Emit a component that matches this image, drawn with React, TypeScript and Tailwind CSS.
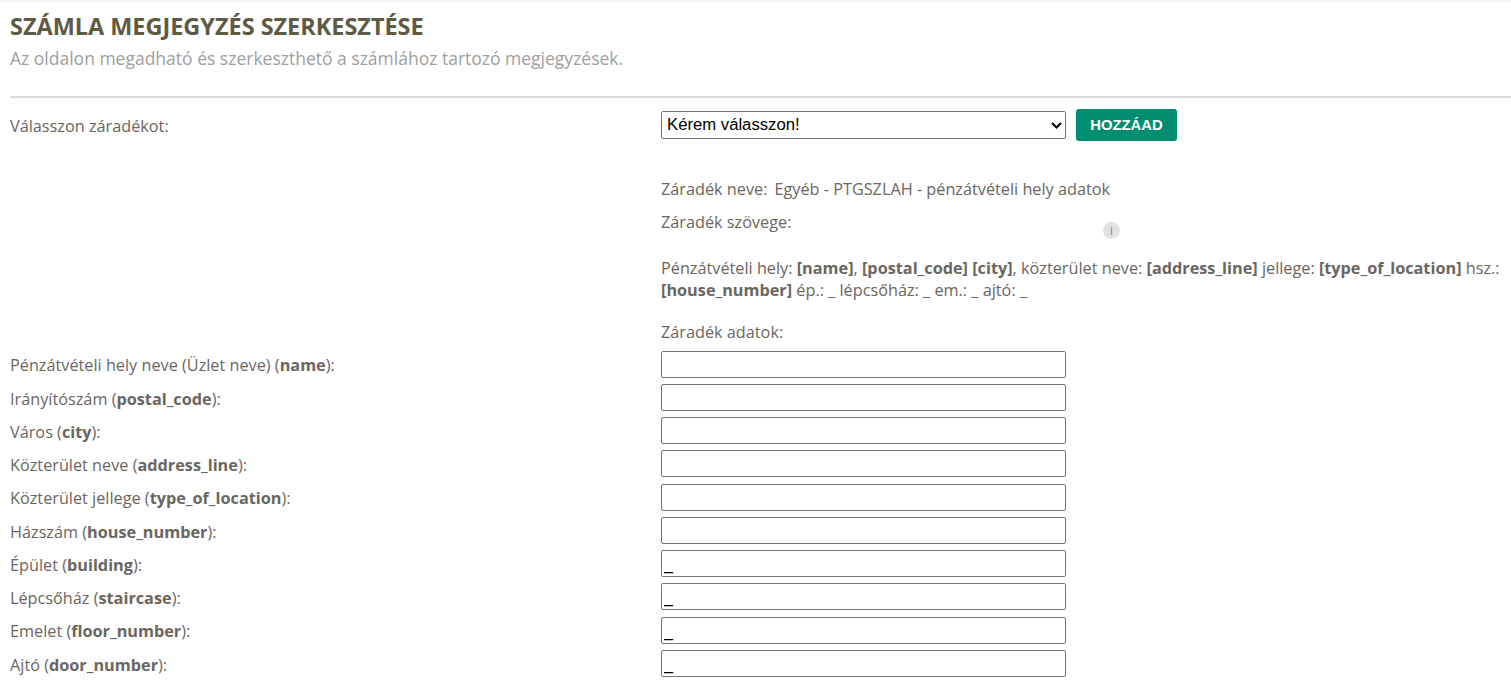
const fields: { label: string; key: string; value: string }[] = [
  { label: 'Pénzátvételi hely neve (Üzlet neve)', key: 'name', value: '' },
  { label: 'Irányítószám', key: 'postal_code', value: '' },
  { label: 'Város', key: 'city', value: '' },
  { label: 'Közterület neve', key: 'address_line', value: '' },
  { label: 'Közterület jellege', key: 'type_of_location', value: '' },
  { label: 'Házszám', key: 'house_number', value: '' },
  { label: 'Épület', key: 'building', value: '_' },
  { label: 'Lépcsőház', key: 'staircase', value: '_' },
  { label: 'Emelet', key: 'floor_number', value: '_' },
  { label: 'Ajtó', key: 'door_number', value: '_' },
];

export default function App() {
  return (
    <div className="h-[684px] overflow-hidden bg-white font-['Open_Sans',sans-serif] text-[16.25px] text-[#6b665f]">
      <div className="h-[3px] bg-gradient-to-b from-[#f2f2f2] to-white" />

      {/* Page header */}
      <div className="pl-[10px] pt-[6px]">
        <h1 className="text-[23.45px] font-bold leading-[34px] text-[#5f5a44]">SZÁMLA MEGJEGYZÉS SZERKESZTÉSE</h1>
        <p className="mt-[3px] text-[17.5px] leading-[24px] text-[#a0a0a0]">Az oldalon megadható és szerkeszthető a számlához tartozó megjegyzések.</p>
        <div className="mt-[26px] h-[2px] bg-[#dcdcdc]" />
      </div>

      {/* Clause select */}
      <div className="mt-[11px] flex pl-[10px]">
        <div className="w-[651px] pt-[6px] leading-[22px]">Válasszon záradékot:</div>
        <div className="flex items-start gap-[10px]">
          <div className="relative mt-[2px]">
            <select className="block h-[28px] w-[405px] appearance-none rounded-[2px] border border-[#767676] bg-white pl-[5px] font-['Liberation_Sans',sans-serif] text-[16.7px] text-black">
              <option>Kérem válasszon!</option>
            </select>
            <svg className="pointer-events-none absolute right-[4px] top-[11px] h-[7px] w-[11px]" viewBox="0 0 11 7" fill="none" stroke="#000" strokeWidth="2">
              <path d="M1 1l4.500 4.500L10 1" />
            </svg>
          </div>
          <button className="h-[32px] w-[101px] rounded-[3px] bg-[#008e71] font-['Liberation_Sans',sans-serif] text-[14.8px] font-bold text-white">HOZZÁAD</button>
        </div>
      </div>

      {/* Clause details */}
      <div className="ml-[661px] mt-[37px] leading-[22px]">
        <div className="flex gap-[7px]">
          <span>Záradék neve:</span>
          <span>Egyéb - PTGSZLAH - pénzátvételi hely adatok</span>
        </div>
        <div className="relative mt-[11px]">
          Záradék szövege:
          <span className="absolute left-[442px] top-[11px] flex h-[17px] w-[17px] items-center justify-center rounded-full bg-[#e3e3e3] text-[12px] leading-none text-[#858585]">i</span>
        </div>
        <p className="mt-[24px] leading-[22px]">
          Pénzátvételi hely: <b>[name]</b>, <b>[postal_code]</b> <b>[city]</b>, közterület neve: <b>[address_line]</b> jellege: <b>[type_of_location]</b> hsz.: <b>[house_number]</b> ép.: _ lépcsőház: _ em.: _ ajtó: _
        </p>
        <div className="mt-[20px]">Záradék adatok:</div>
      </div>

      {/* Clause data fields */}
      <div className="mt-[7.6px] flex flex-col gap-[6.25px] pl-[10px]">
        {fields.map((f) => (
          <div key={f.key} className="flex h-[27px] items-center">
            <label className="w-[651px] pt-[3px]">
              {f.label} (<b>{f.key}</b>):
            </label>
            <input
              readOnly
              value={f.value}
              className="h-[27px] w-[405px] rounded-[2px] border border-[#767676] bg-white px-[2px] pt-[3px] font-['Liberation_Sans',sans-serif] text-[16px] text-black"
            />
          </div>
        ))}
      </div>
    </div>
  );
}
